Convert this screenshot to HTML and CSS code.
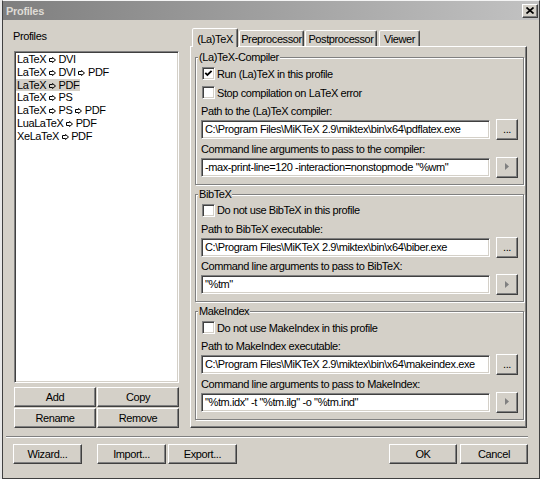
FILE: index.html
```html
<!DOCTYPE html>
<html>
<head>
<meta charset="utf-8">
<link rel="stylesheet" href="styles.css">
</head>
<body>
<div class="window">
  <div class="titlebar">
    <span class="title">Profiles</span>
    <span class="close"><svg width="8" height="7" viewBox="0 0 8 7"><path d="M0.5 0.5L7.5 6.5M7.5 0.5L0.5 6.5" stroke="#000" stroke-width="1.7" fill="none"/></svg></span>
  </div>
  <div class="client">
    <div class="main">
      <div class="left">
        <div class="lbl">Profiles</div>
        <div class="list">
          <div class="item"><span>LaTeX <svg class="arr" width="7" height="6" viewBox="0 0 7 6"><path d="M0.5 1.5H3.5V0.5L6.5 3L3.5 5.5V4.5H0.5Z"/></svg> DVI</span></div>
          <div class="item"><span>LaTeX <svg class="arr" width="7" height="6" viewBox="0 0 7 6"><path d="M0.5 1.5H3.5V0.5L6.5 3L3.5 5.5V4.5H0.5Z"/></svg> DVI <svg class="arr" width="7" height="6" viewBox="0 0 7 6"><path d="M0.5 1.5H3.5V0.5L6.5 3L3.5 5.5V4.5H0.5Z"/></svg> PDF</span></div>
          <div class="item sel"><span>LaTeX <svg class="arr" width="7" height="6" viewBox="0 0 7 6"><path d="M0.5 1.5H3.5V0.5L6.5 3L3.5 5.5V4.5H0.5Z"/></svg> PDF</span></div>
          <div class="item"><span>LaTeX <svg class="arr" width="7" height="6" viewBox="0 0 7 6"><path d="M0.5 1.5H3.5V0.5L6.5 3L3.5 5.5V4.5H0.5Z"/></svg> PS</span></div>
          <div class="item"><span>LaTeX <svg class="arr" width="7" height="6" viewBox="0 0 7 6"><path d="M0.5 1.5H3.5V0.5L6.5 3L3.5 5.5V4.5H0.5Z"/></svg> PS <svg class="arr" width="7" height="6" viewBox="0 0 7 6"><path d="M0.5 1.5H3.5V0.5L6.5 3L3.5 5.5V4.5H0.5Z"/></svg> PDF</span></div>
          <div class="item"><span>LuaLaTeX <svg class="arr" width="7" height="6" viewBox="0 0 7 6"><path d="M0.5 1.5H3.5V0.5L6.5 3L3.5 5.5V4.5H0.5Z"/></svg> PDF</span></div>
          <div class="item"><span>XeLaTeX <svg class="arr" width="7" height="6" viewBox="0 0 7 6"><path d="M0.5 1.5H3.5V0.5L6.5 3L3.5 5.5V4.5H0.5Z"/></svg> PDF</span></div>
        </div>
        <div class="btngrid">
          <div class="btn">Add</div>
          <div class="btn">Copy</div>
          <div class="btn">Rename</div>
          <div class="btn">Remove</div>
        </div>
      </div>
      <div class="right">
        <div class="tabs">
          <div class="tab active t1">(La)TeX</div>
          <div class="tab t2">Preprocessor</div>
          <div class="tab t3">Postprocessor</div>
          <div class="tab t4">Viewer</div>
        </div>
        <div class="panel">
          <fieldset class="group">
            <legend>(La)TeX-Compiler</legend>
            <div class="cbrow"><span class="cb"><svg width="9" height="9" viewBox="0 0 9 9"><polyline points="1.3,3.8 3.4,6 7.6,1.8" fill="none" stroke="#000" stroke-width="1.8"/></svg></span>Run (La)TeX in this profile</div>
            <div class="cbrow"><span class="cb"></span>Stop compilation on LaTeX error</div>
            <div class="flabel">Path to the (La)TeX compiler:</div>
            <div class="frow"><div class="input">C:\Program Files\MiKTeX 2.9\miktex\bin\x64\pdflatex.exe</div><div class="btn sbtn">...</div></div>
            <div class="flabel">Command line arguments to pass to the compiler:</div>
            <div class="frow"><div class="input">-max-print-line=120 -interaction=nonstopmode "%wm"</div><div class="btn sbtn"><svg width="4" height="7" viewBox="0 0 4 7"><path d="M0 0L4 3.5L0 7Z" fill="#808080"/></svg></div></div>
          </fieldset>
          <fieldset class="group">
            <legend>BibTeX</legend>
            <div class="cbrow"><span class="cb"></span>Do not use BibTeX in this profile</div>
            <div class="flabel">Path to BibTeX executable:</div>
            <div class="frow"><div class="input">C:\Program Files\MiKTeX 2.9\miktex\bin\x64\biber.exe</div><div class="btn sbtn">...</div></div>
            <div class="flabel">Command line arguments to pass to BibTeX:</div>
            <div class="frow"><div class="input">"%tm"</div><div class="btn sbtn"><svg width="4" height="7" viewBox="0 0 4 7"><path d="M0 0L4 3.5L0 7Z" fill="#808080"/></svg></div></div>
          </fieldset>
          <fieldset class="group">
            <legend>MakeIndex</legend>
            <div class="cbrow"><span class="cb"></span>Do not use MakeIndex in this profile</div>
            <div class="flabel">Path to MakeIndex executable:</div>
            <div class="frow"><div class="input">C:\Program Files\MiKTeX 2.9\miktex\bin\x64\makeindex.exe</div><div class="btn sbtn">...</div></div>
            <div class="flabel">Command line arguments to pass to MakeIndex:</div>
            <div class="frow"><div class="input">"%tm.idx" -t "%tm.ilg" -o "%tm.ind"</div><div class="btn sbtn"><svg width="4" height="7" viewBox="0 0 4 7"><path d="M0 0L4 3.5L0 7Z" fill="#808080"/></svg></div></div>
          </fieldset>
        </div>
      </div>
    </div>
    <div class="sep"></div>
    <div class="bottom">
      <div class="btn bw wizard">Wizard...</div>
      <div class="btn bw">Import...</div>
      <div class="btn bw export">Export...</div>
      <div class="spacer"></div>
      <div class="btn bo">OK</div>
      <div class="btn bo cancel">Cancel</div>
    </div>
  </div>
</div>
</body>
</html>
```

FILE: styles.css
```css
* { box-sizing: border-box; }

body {
  margin: 0;
  background: #e8e8e8;
  font-family: "Liberation Sans", Arial, sans-serif;
  font-size: 11px;
  letter-spacing: -0.4px;
  color: #000;
}

.window {
  margin-left: 2px;
  width: 538px;
  height: 479px;
  background: #d4d0c8;
  border-top: 1px solid #f4f4f4;
  border-left: 1px solid #404040;
  border-right: 1px solid #404040;
  border-bottom: 1px solid #404040;
  display: flex;
  flex-direction: column;
}

.titlebar {
  height: 19px;
  background: linear-gradient(to right, #7f7f7f, #c2c2c2);
  display: flex;
  align-items: center;
  justify-content: space-between;
  padding: 0 1px 0 3px;
}

.title {
  font-weight: bold;
  color: #dedbd5;
  letter-spacing: -0.3px;
}

.close {
  width: 16px;
  height: 14px;
  background: #d4d0c8;
  border: 1px solid;
  border-color: #fff #404040 #404040 #fff;
  box-shadow: inset -1px -1px 0 #808080;
  display: flex;
  align-items: center;
  justify-content: center;
}

.client {
  flex: 1;
  display: flex;
  flex-direction: column;
}

.main {
  display: flex;
  gap: 11px;
  padding: 8px 11px 0 11px;
}

.left {
  width: 165px;
  display: flex;
  flex-direction: column;
}

.lbl {
  margin: 2px 0 8px -1px;
  line-height: 13px;
  height: 13px;
}

.list {
  height: 332px;
  background: #fff;
  border: 1px solid;
  border-color: #808080 #fff #fff #808080;
  box-shadow: inset 1px 1px 0 #404040, inset -1px -1px 0 #d4d0c8;
  padding: 1px 0 0 1px;
}

.item {
  line-height: 12.8px;
  height: 12.8px;
  white-space: nowrap;
}

.item span {
  padding: 0 1px;
}

.item.sel span {
  background: #d4d0c8;
}

.arr {
  vertical-align: 0;
}

.arr path {
  fill: none;
  stroke: #000;
  stroke-width: 1;
}

.btngrid {
  margin-top: 4px;
  display: grid;
  grid-template-columns: 82px 82px;
  grid-auto-rows: 20px;
  gap: 1px;
}

.btn {
  background: #d4d0c8;
  border: 1px solid;
  border-color: #fff #404040 #404040 #fff;
  box-shadow: inset -1px -1px 0 #808080;
  display: flex;
  align-items: center;
  justify-content: center;
  white-space: nowrap;
}

.right {
  width: 337px;
  display: flex;
  flex-direction: column;
}

.tabs {
  height: 18px;
  display: flex;
  align-items: flex-end;
  padding-left: 2px;
}

.tab {
  height: 16px;
  line-height: 14px;
  padding-top: 1px;
  text-align: center;
  border: 1px solid;
  border-bottom: none;
  border-color: #fff #404040 transparent #fff;
  box-shadow: inset -1px 0 0 #808080;
  border-radius: 2px 2px 0 0;
  background: #d4d0c8;
}

.tab.active {
  height: 19px;
  padding-top: 3px;
  margin-bottom: -1px;
  position: relative;
  z-index: 1;
}

.t1 { width: 46px; }
.t2 { width: 65px; margin-left: 1px; }
.t3 { width: 72px; margin-left: 1px; }
.t4 { width: 41px; margin-left: 2px; }

.panel {
  height: 382px;
  border: 1px solid;
  border-color: #fff #404040 #404040 #fff;
  box-shadow: inset -1px -1px 0 #808080;
  padding: 4px 2px 0 4px;
  display: flex;
  flex-direction: column;
  gap: 3px;
}

.group {
  margin: 0;
  min-width: 0;
  padding: 0 5px 7px 5px;
  border: 1px solid #808080;
  box-shadow: inset 1px 1px 0 #fff, 1px 1px 0 #fff;
}

.group legend {
  padding: 0 1px;
  margin-left: -3px;
  line-height: 13px;
  background: #d4d0c8;
}

.cbrow {
  height: 19px;
  display: flex;
  align-items: center;
  padding-left: 1px;
  white-space: nowrap;
}

.cb {
  width: 13px;
  height: 13px;
  flex: none;
  background: #fff;
  border: 1px solid;
  border-color: #808080 #fff #fff #808080;
  box-shadow: inset 1px 1px 0 #404040, inset -1px -1px 0 #d4d0c8;
  margin-right: 2px;
  display: flex;
  align-items: center;
  justify-content: center;
}

.flabel {
  line-height: 13px;
  margin-top: 3.5px;
  margin-bottom: 2px;
  white-space: nowrap;
}

.cbrow + .flabel {
  margin-top: 3px;
}

.frow {
  height: 19px;
  display: flex;
  gap: 6px;
}

.input {
  flex: 1;
  min-width: 0;
  background: #fff;
  border: 1px solid;
  border-color: #808080 #fff #fff #808080;
  box-shadow: inset 1px 1px 0 #404040, inset -1px -1px 0 #d4d0c8;
  padding-left: 3px;
  line-height: 17px;
  white-space: nowrap;
  overflow: hidden;
}

.sbtn {
  width: 22px;
  flex: none;
  margin: -1px 0;
  height: 21px;
  padding-bottom: 1px;
}

.sep {
  margin: 8px 11px 0 3px;
  height: 2px;
  border-top: 1px solid #808080;
  border-bottom: 1px solid #fff;
}

.bottom {
  margin-top: 6px;
  height: 20px;
  display: flex;
  padding: 0 11px 0 10px;
}

.bw { width: 69px; }
.wizard { margin-right: 15px; }
.export { margin-left: 2px; }
.spacer { flex: 1; }
.bo { width: 68px; }
.cancel { margin-left: 3px; }
```
